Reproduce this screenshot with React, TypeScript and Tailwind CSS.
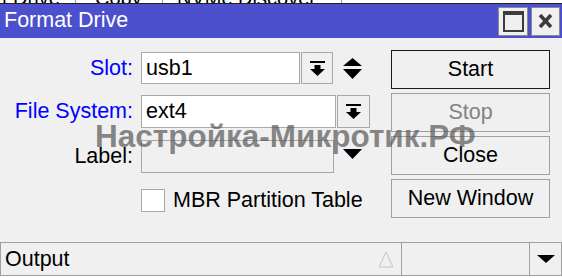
import React from "react";

const font = { fontFamily: '"Liberation Sans", Arial, sans-serif' };

function DropIcon() {
  // bar over a down arrow, as on the combo buttons
  return (
    <svg width="15" height="15" viewBox="0 0 15 15">
      <rect x="0" y="0" width="15" height="2" fill="#000" />
      <rect x="4.5" y="4" width="6" height="4" fill="#000" />
      <polygon points="0,8 15,8 7.5,15" fill="#000" />
    </svg>
  );
}

function UpDown() {
  return (
    <svg width="19" height="21" viewBox="0 0 19 21">
      <polygon points="0,8 19,8 9.5,0" fill="#000" />
      <polygon points="0,11 19,11 9.5,21" fill="#000" />
    </svg>
  );
}

function Down({ w = 19, h = 10 }: { w?: number; h?: number }) {
  return (
    <svg width={w} height={h} viewBox={`0 0 ${w} ${h}`}>
      <polygon points={`0,0 ${w},0 ${w / 2},${h}`} fill="#000" />
    </svg>
  );
}

function SideButton({
  label,
  strong,
  disabled,
}: {
  label: string;
  strong?: boolean;
  disabled?: boolean;
}) {
  return (
    <div
      className={`flex h-[39px] items-center justify-center border bg-[#f0f0f0] text-[21.5px] ${
        strong ? "border-[#1a1a1a]" : "border-[#a0a0a0]"
      } ${disabled ? "text-[#838383]" : "text-black"}`}
    >
      {label}
    </div>
  );
}

export default function App() {
  return (
    <div
      className="relative h-[278px] w-[562px] overflow-hidden bg-[#f0f0f0] text-black"
      style={font}
    >
      {/* column headers of the window behind, peeking out */}
      <div className="relative h-[4px] overflow-hidden border-b border-[#222] bg-white text-[20px] leading-none">
        <div className="-mt-[12px] flex">
          <span className="w-[76px] border-r border-[#999] pl-[2px]">t Drive</span>
          <span className="w-[87px] border-r border-[#999] pl-[19px]">Copy</span>
          <span className="w-[179px] border-r border-[#999] pl-[14px]">NVMe Discover</span>
        </div>
      </div>

      {/* title bar */}
      <div className="flex h-[34px] items-center bg-[#4c50cc] pl-[4px] pr-[2px]">
        <span className="text-[21.5px] leading-none text-white">Format Drive</span>
        <div className="ml-auto flex gap-[3px]">
          <div className="flex h-[29px] w-[30px] items-center justify-center border border-[#8a8a8a] bg-[#f0f0f0]">
            <div className="h-[21px] w-[21px] border-2 border-t-4 border-[#3c3c3c]" />
          </div>
          <div className="flex h-[29px] w-[29px] items-center justify-center border border-[#8a8a8a] bg-[#f0f0f0]">
            <svg width="15" height="14" viewBox="0 0 15 14">
              <path d="M2 1 L13 13 M13 1 L2 13" stroke="#3c3c3c" strokeWidth="3.6" />
            </svg>
          </div>
        </div>
      </div>

      {/* body */}
      <div className="flex h-[204px]">
        <div className="w-[391px] pt-[14px] text-[21.5px]">
          <div className="flex h-[32px] items-center">
            <span className="w-[133px] text-right text-[#0000ff]">Slot:</span>
            <div className="ml-[8px] flex h-full w-[159px] items-center border border-[#a9a9a9] bg-white pl-[4px]">
              usb1
            </div>
            <div className="ml-[1px] flex h-full w-[32px] items-center justify-center border border-[#a9a9a9] bg-[#f0f0f0]">
              <DropIcon />
            </div>
            <div className="ml-[10px] flex items-center">
              <UpDown />
            </div>
          </div>

          <div className="mt-[11px] flex h-[33px] items-center">
            <span className="w-[133px] text-right text-[#0000ff]">File System:</span>
            <div className="ml-[8px] flex h-full w-[195px] items-center border border-[#a9a9a9] bg-white pl-[4px]">
              ext4
            </div>
            <div className="ml-[1px] flex h-full w-[33px] items-center justify-center border border-[#a9a9a9] bg-[#f0f0f0]">
              <DropIcon />
            </div>
          </div>

          <div className="mt-[12px] flex h-[33px] items-center">
            <span className="w-[133px] text-right">Label:</span>
            <div className="ml-[8px] h-full w-[193px] border border-[#a9a9a9] bg-[#f0f0f0]" />
            <div className="ml-[9px] -mt-[6px] flex items-center">
              <Down />
            </div>
          </div>

          <div className="mt-[16px] flex h-[23px] items-center">
            <div className="ml-[141px] h-[23px] w-[24px] border border-[#a9a9a9] bg-white" />
            <span className="ml-[8px]">MBR Partition Table</span>
          </div>
        </div>

        <div className="flex w-[159px] flex-col gap-[4px] pt-[12px]">
          <SideButton label="Start" strong />
          <SideButton label="Stop" disabled />
          <SideButton label="Close" />
          <SideButton label="New Window" />
        </div>
      </div>

      {/* output list header */}
      <div className="flex h-[34px] border border-[#a0a0a0] bg-[#f0f0f0] text-[21.5px]">
        <div className="flex w-[401px] items-center border-r border-[#a0a0a0] pl-[4px]">
          <span>Output</span>
          <svg className="ml-auto mr-[7px]" width="16" height="17" viewBox="0 0 16 17">
            <polygon points="8,1 15,16 1,16" fill="none" stroke="#c4c4c4" strokeWidth="1" />
          </svg>
        </div>
        <div className="w-[128px] border-r border-[#a0a0a0]" />
        <div className="flex flex-1 items-center justify-center">
          <Down w={18} h={8} />
        </div>
      </div>
      <div className="h-[4px] bg-white" />

      {/* watermark */}
      <div className="pointer-events-none absolute left-[95px] top-[121px] whitespace-nowrap text-[31.5px] font-bold leading-none text-[#555]/70">
        Настройка-Микротик.РФ
      </div>
    </div>
  );
}
